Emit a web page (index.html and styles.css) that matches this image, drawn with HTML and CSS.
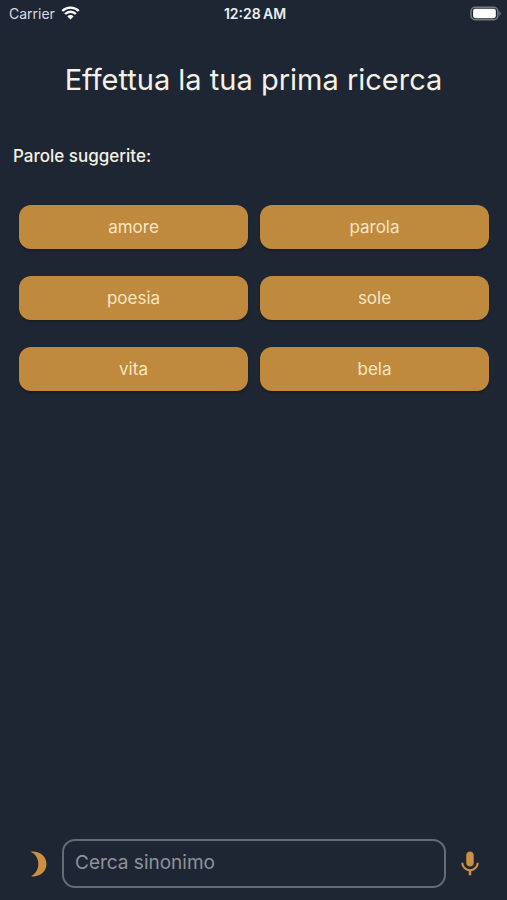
FILE: index.html
```html
<!DOCTYPE html>
<html lang="it">
<head>
<meta charset="utf-8">
<meta name="viewport" content="width=device-width, initial-scale=1">
<title>Sinonimi</title>
<link rel="stylesheet" href="styles.css">
</head>
<body>
<header class="status">
  <div class="carrier">
    <span>Carrier</span>
    <svg class="wifi" viewBox="0 0 18 14" aria-hidden="true">
      <path d="M.8 5a11.600 11.600 0 0 1 16.400 0M3.600 8a7.600 7.600 0 0 1 10.800 0" fill="none" stroke="currentColor" stroke-width="2.400"/>
      <path d="M5.900 10.400a4.400 4.400 0 0 1 6.200 0L9 13.600z" fill="currentColor"/>
    </svg>
  </div>
  <time class="clock">12:28&#8201;AM</time>
  <svg class="battery" viewBox="0 0 30 14" aria-hidden="true">
    <rect x="1" y="1" width="26" height="12" rx="4" fill="none" stroke="#747983" stroke-width="1.500"/>
    <rect x="3" y="2.500" width="22" height="9" rx="2" fill="#fff"/>
    <path d="M28.400 4.800q3 2.200 0 4.400z" fill="#747983"/>
  </svg>
</header>
<main class="content">
  <h1 class="title">Effettua la tua prima ricerca</h1>
  <h2 class="subtitle">Parole suggerite:</h2>
  <div class="words">
    <button class="word" type="button">amore</button>
    <button class="word" type="button">parola</button>
    <button class="word" type="button">poesia</button>
    <button class="word" type="button">sole</button>
    <button class="word" type="button">vita</button>
    <button class="word" type="button">bela</button>
  </div>
</main>
<form class="search">
  <button class="icon-button" type="button" aria-label="Tema scuro">
    <svg class="icon" viewBox="0 0 30 30" aria-hidden="true"><path d="M7.500 2.700C16 1.500 23.500 7 23.500 15S16 28.500 7.500 27.300C18 23 18 7 7.500 2.700z" fill="currentColor"/></svg>
  </button>
  <input class="field" type="text" placeholder="Cerca sinonimo" aria-label="Cerca sinonimo">
  <button class="icon-button" type="button" aria-label="Ricerca vocale">
    <svg class="icon" viewBox="0 0 24 24" aria-hidden="true"><path d="M12 14c1.660 0 3-1.340 3-3V5c0-1.660-1.340-3-3-3S9 3.340 9 5v6c0 1.660 1.340 3 3 3zm5.300-3c0 3-2.540 5.100-5.300 5.100S6.700 14 6.700 11H5c0 3.410 2.720 6.230 6 6.720V21h2v-3.280c3.280-.48 6-3.300 6-6.720h-1.700z" fill="currentColor"/></svg>
  </button>
</form>
</body>
</html>
```
FILE: styles.css
```css
* {
  box-sizing: border-box;
}

body {
  margin: 0;
  min-height: 100vh;
  display: flex;
  flex-direction: column;
  background: #1f2633;
  color: #f5f2e6;
  font-family: Inter, "Liberation Sans", sans-serif;
}

.status {
  display: grid;
  grid-template-columns: 1fr auto 1fr;
  align-items: center;
  height: 26px;
  padding: 0 6px 0 9px;
  font-size: 14px;
  color: #d9dce2;
}

.carrier {
  display: flex;
  align-items: center;
  gap: 6px;
}

.wifi {
  width: 19px;
  height: 14px;
  color: #fff;
}

.clock {
  font-weight: 600;
  color: #eceef2;
}

.battery {
  width: 31px;
  height: 15px;
  justify-self: end;
}

.content {
  flex: 1;
}

.title {
  margin: 34px 16px 0;
  font-size: 29px;
  line-height: 40px;
  font-weight: 400;
  text-align: center;
}

.subtitle {
  margin: 44px 13px 0;
  font-size: 17px;
  line-height: 24px;
  font-weight: 500;
}

.words {
  display: grid;
  grid-template-columns: 1fr 1fr;
  gap: 27px 12px;
  padding: 37px 18px 0 19px;
}

.word {
  height: 44px;
  padding: 0;
  border: 0;
  border-radius: 12px;
  background: #c08a3e;
  box-shadow: 0 2px 2px #1b1d22;
  color: #fbe6c4;
  font: 400 17px/24px Inter, "Liberation Sans", sans-serif;
}

.search {
  display: flex;
  align-items: center;
  padding: 0 13px 12px 14px;
}

.icon-button {
  display: grid;
  place-items: center;
  width: 48px;
  height: 48px;
  padding: 0;
  border: 0;
  background: none;
  color: #cb9041;
}

.icon {
  width: 30px;
  height: 30px;
}

.field {
  flex: 1;
  min-width: 0;
  height: 49px;
  padding: 0 11px 2px;
  border: 2px solid #656b76;
  border-radius: 13px;
  background: transparent;
  color: #f5f2e6;
  font: 400 19px/24px Inter, "Liberation Sans", sans-serif;
}

.field::placeholder {
  color: #8d929c;
  opacity: 1;
}
```
